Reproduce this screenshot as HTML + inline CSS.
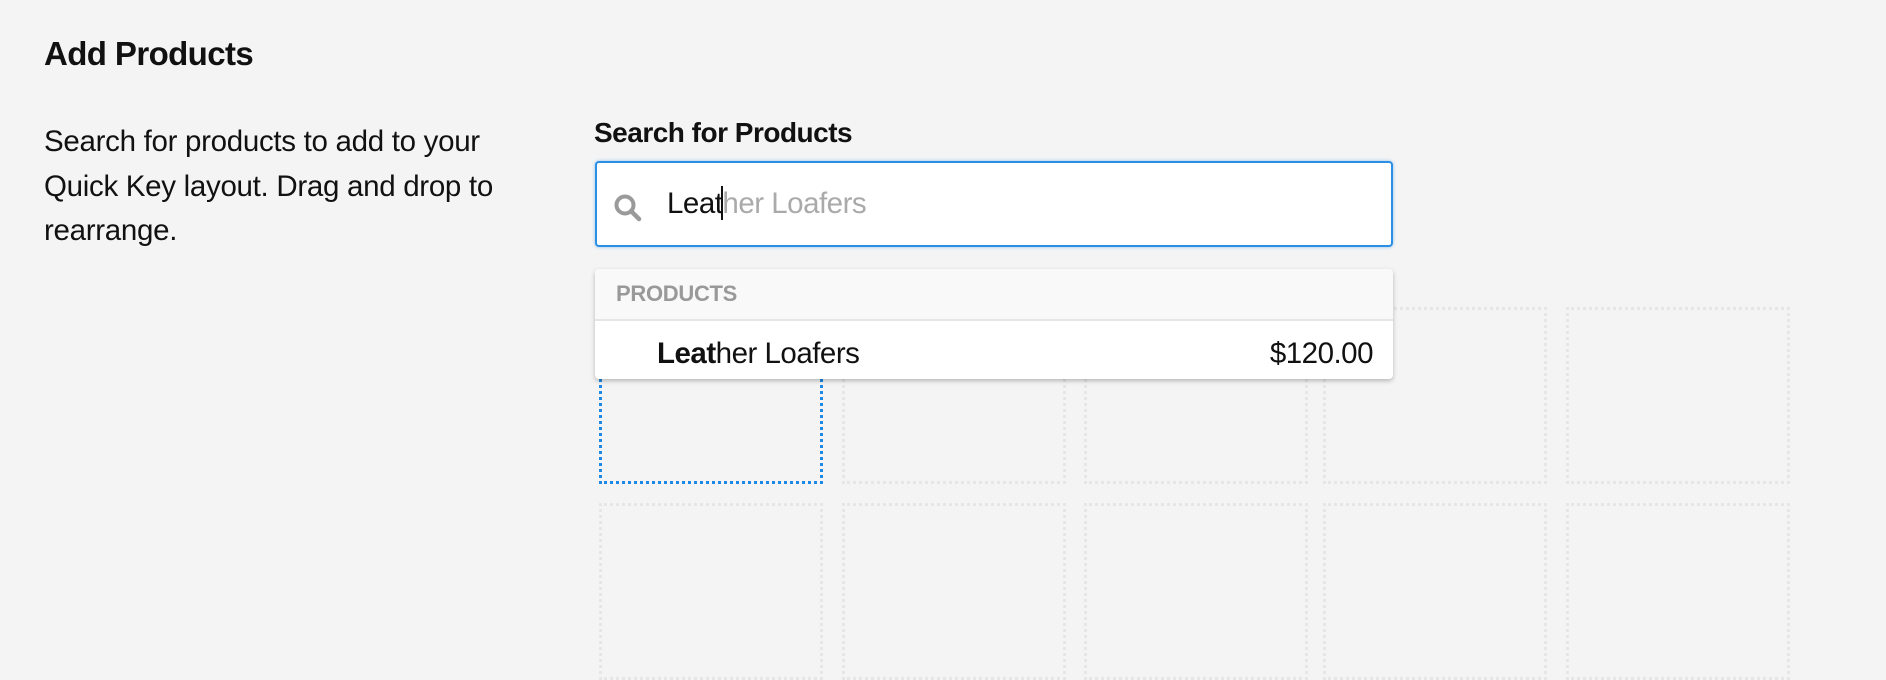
<!DOCTYPE html>
<html><head><meta charset="utf-8"><style>
*{margin:0;padding:0;box-sizing:border-box}
html,body{width:1886px;height:590px;overflow:hidden;background:#f4f4f4;font-family:"Liberation Sans",sans-serif;color:#111}
.abs{position:absolute}
h1{position:absolute;left:44px;top:35px;font-size:33px;font-weight:bold;letter-spacing:-0.6px}
.desc{position:absolute;left:44px;top:120px;font-size:29.5px;line-height:44.5px;width:505px;letter-spacing:-0.3px}
.label{position:absolute;left:594px;top:117px;font-size:28px;font-weight:bold;letter-spacing:-0.5px}
.input{position:absolute;left:595px;top:161px;width:798px;height:86px;background:#fff;border:2px solid #2b8fe4;border-radius:4px;box-shadow:0 0 3px rgba(43,143,228,.5)}
.tile{position:absolute;width:224px;height:177px;border:3px dotted #e6e6e6}
.drop{position:absolute;left:595px;top:269px;width:798px;height:110px;background:#fff;border-radius:4px;box-shadow:0 2px 5px rgba(0,0,0,.25);overflow:hidden}
.dh{height:52px;background:#f9f9f9;border-bottom:2px solid #e6e6e6;color:#999;font-weight:bold;font-size:22px;padding:12px 0 0 21px;letter-spacing:-0.3px}
</style></head><body>
<h1>Add Products</h1>
<div class="desc">Search for products to add to your<br>Quick Key layout. Drag and drop to<br>rearrange.</div>
<div class="label">Search for Products</div>

<div class="tile" style="left:599px;top:307px;border-color:#1e88e5"></div>
<div class="tile" style="left:842px;top:307px"></div>
<div class="tile" style="left:1084px;top:307px"></div>
<div class="tile" style="left:1323px;top:307px"></div>
<div class="tile" style="left:1566px;top:307px"></div>
<div class="tile" style="left:599px;top:503px"></div>
<div class="tile" style="left:842px;top:503px"></div>
<div class="tile" style="left:1084px;top:503px"></div>
<div class="tile" style="left:1323px;top:503px"></div>
<div class="tile" style="left:1566px;top:503px"></div>

<div class="input">
<svg class="abs" style="left:16px;top:30px" width="32" height="30" viewBox="0 0 32 30"><circle cx="12" cy="12" r="8.5" fill="none" stroke="#9a9a9a" stroke-width="4"/><line x1="18" y1="18" x2="26" y2="26" stroke="#9a9a9a" stroke-width="4.5" stroke-linecap="round"/></svg>
<div class="abs" style="left:70px;top:23px;font-size:29.5px;letter-spacing:-0.5px;white-space:nowrap"><span style="color:#111">Leat</span><span style="display:inline-block;width:2px;height:34px;background:#111;vertical-align:-7px;margin:0 -1px"></span><span style="color:#aaa">her Loafers</span></div>
</div>

<div class="drop">
<div class="dh">PRODUCTS</div>
<div class="abs" style="left:62px;top:68px;font-size:29.5px;letter-spacing:-0.5px"><b>Leat</b>her Loafers</div>
<div class="abs" style="right:20px;top:68px;font-size:29.5px;letter-spacing:-0.5px">$120.00</div>
</div>
</body></html>
